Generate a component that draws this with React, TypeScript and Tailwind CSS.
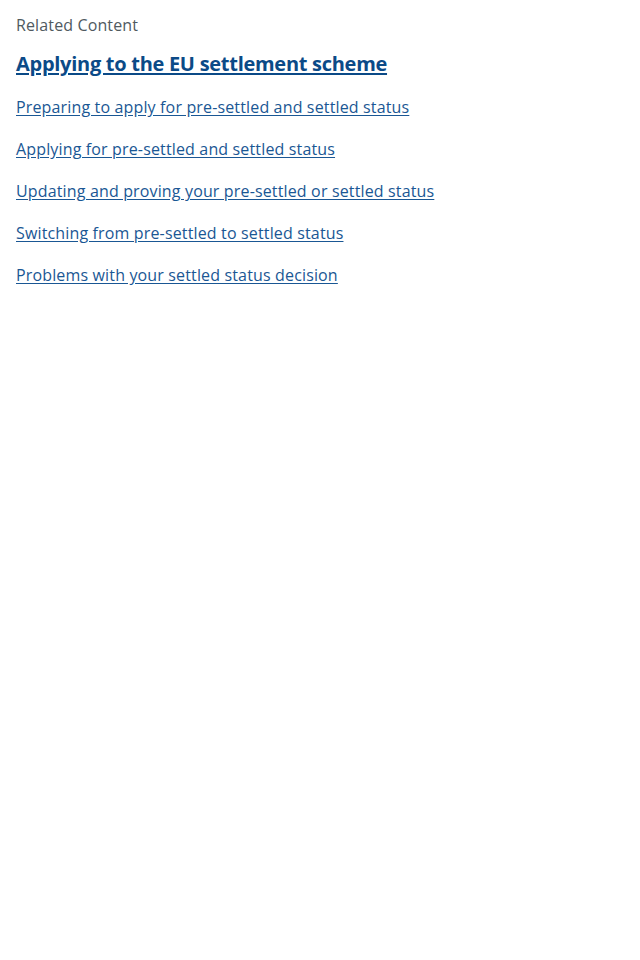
import React from "react";

const links = [
  "Preparing to apply for pre-settled and settled status",
  "Applying for pre-settled and settled status",
  "Updating and proving your pre-settled or settled status",
  "Switching from pre-settled to settled status",
  "Problems with your settled status decision",
];

export default function App() {
  return (
    <div className="min-h-screen bg-white px-4 pt-[13px]" style={{ fontFamily: '"Open Sans", sans-serif' }}>
      <p className="text-[16px] leading-[24px] tracking-[0.13px] text-[#505a5f]">Related Content</p>
      <h2 className="mt-[13px] text-[20px] font-bold leading-[28px] tracking-[-0.28px] text-[#0b4a87]">
        <a href="#" className="underline decoration-2 underline-offset-2">Applying to the EU settlement scheme</a>
      </h2>
      <ul className="mt-[17px] flex flex-col gap-[18px]">
        {links.map((l) => (
          <li key={l} className="text-[16px] leading-[24px] tracking-[0.15px]">
            <a href="#" className="text-[#1a5794] underline underline-offset-2">{l}</a>
          </li>
        ))}
      </ul>
    </div>
  );
}
